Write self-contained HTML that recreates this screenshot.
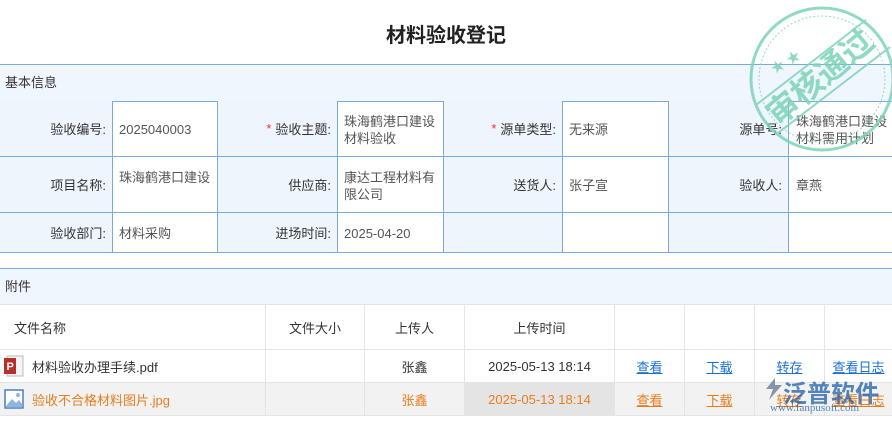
<!DOCTYPE html>
<html><head><meta charset="utf-8"><style>
*{margin:0;padding:0;box-sizing:border-box}
body{width:892px;height:425px;background:#fff;font-family:"Liberation Sans","Noto Sans CJK SC",sans-serif;font-size:13px;color:#333;position:relative;overflow:hidden}
.title{position:absolute;left:0;right:0;top:19px;text-align:center;font-size:20px;font-weight:bold;color:#222}
.bar{position:absolute;left:0;width:892px;background:#f0f6fd;border-top:1px solid #7aaad8;padding-left:5px;font-size:13px;color:#333}
.c{position:absolute;border-right:1px solid #7aaad8;border-bottom:1px solid #7aaad8}
.l{background:#eef5fd;text-align:right;padding-right:6px;display:flex;align-items:center;justify-content:flex-end}
.v{padding:12px 6px 0 6px;line-height:17px;color:#555}
.s{color:#e33;margin-right:4px}
.t{position:absolute;border-right:1px solid #e4e4e4;border-bottom:1px solid #e4e4e4;display:flex;align-items:center;justify-content:center}
a{color:#1a6fd4;text-decoration:underline}
.o{color:#e87d1d}
</style></head><body>
<div class="title">材料验收登记</div>
<div class="bar" style="top:64px;height:37px;line-height:36px">基本信息</div>
<div style="position:absolute;left:0;top:101px;width:892px;height:1px;background:#7aaad8"></div>

<div class="c l" style="left:0;top:101px;width:113px;height:56px">验收编号:</div>
<div class="c v" style="left:113px;top:101px;width:105px;height:56px;padding-top:20px">2025040003</div>
<div class="c l" style="left:218px;top:101px;width:120px;height:56px"><span class="s">*</span>验收主题:</div>
<div class="c v" style="left:338px;top:101px;width:106px;height:56px">珠海鹤港口建设材料验收</div>
<div class="c l" style="left:444px;top:101px;width:119px;height:56px"><span class="s">*</span>源单类型:</div>
<div class="c v" style="left:563px;top:101px;width:106px;height:56px;padding-top:20px">无来源</div>
<div class="c l" style="left:669px;top:101px;width:120px;height:56px">源单号:</div>
<div class="c v" style="left:789px;top:101px;width:103px;height:56px;padding:12px 0 0 7px;border-right:none;white-space:nowrap">珠海鹤港口建设<br>材料需用计划</div>

<div class="c l" style="left:0;top:157px;width:113px;height:56px">项目名称:</div>
<div class="c v" style="left:113px;top:157px;width:105px;height:56px">珠海鹤港口建设</div>
<div class="c l" style="left:218px;top:157px;width:120px;height:56px">供应商:</div>
<div class="c v" style="left:338px;top:157px;width:106px;height:56px">康达工程材料有限公司</div>
<div class="c l" style="left:444px;top:157px;width:119px;height:56px">送货人:</div>
<div class="c v" style="left:563px;top:157px;width:106px;height:56px;padding-top:20px">张子宣</div>
<div class="c l" style="left:669px;top:157px;width:120px;height:56px">验收人:</div>
<div class="c v" style="left:789px;top:157px;width:103px;height:56px;padding-top:20px;padding-left:7px;border-right:none">章燕</div>

<div class="c l" style="left:0;top:213px;width:113px;height:40px">验收部门:</div>
<div class="c v" style="left:113px;top:213px;width:105px;height:40px">材料采购</div>
<div class="c l" style="left:218px;top:213px;width:120px;height:40px">进场时间:</div>
<div class="c v" style="left:338px;top:213px;width:106px;height:40px">2025-04-20</div>
<div class="c l" style="left:444px;top:213px;width:119px;height:40px"></div>
<div class="c v" style="left:563px;top:213px;width:106px;height:40px"></div>
<div class="c l" style="left:669px;top:213px;width:120px;height:40px"></div>
<div class="c v" style="left:789px;top:213px;width:103px;height:40px;border-right:none"></div>

<div class="bar" style="top:268px;height:37px;line-height:36px;border-bottom:1px solid #e4e4e4">附件</div>

<div class="t" style="left:0;top:305px;width:266px;height:45px;justify-content:flex-start;padding-left:14px">文件名称</div>
<div class="t" style="left:266px;top:305px;width:99px;height:45px">文件大小</div>
<div class="t" style="left:365px;top:305px;width:100px;height:45px">上传人</div>
<div class="t" style="left:465px;top:305px;width:150px;height:45px">上传时间</div>
<div class="t" style="left:615px;top:305px;width:70px;height:45px"></div>
<div class="t" style="left:685px;top:305px;width:70px;height:45px"></div>
<div class="t" style="left:755px;top:305px;width:70px;height:45px"></div>
<div class="t" style="left:825px;top:305px;width:67px;height:45px;border-right:none"></div>

<div class="t" style="left:0;top:350px;width:266px;height:33px;justify-content:flex-start;padding-left:4px"><svg width="20" height="22" viewBox="0 0 20 22" style="margin-right:8px"><rect x="3" y="1" width="16" height="20" fill="#f4f4f4" stroke="#bbb"/><rect x="0" y="3" width="12" height="16" fill="#b7312c"/><text x="2.5" y="15" font-size="11" fill="#fff" font-family="Liberation Sans" font-weight="bold">P</text></svg>材料验收办理手续.pdf</div>
<div class="t" style="left:266px;top:350px;width:99px;height:33px"></div>
<div class="t" style="left:365px;top:350px;width:100px;height:33px">张鑫</div>
<div class="t" style="left:465px;top:350px;width:150px;height:33px">2025-05-13 18:14</div>
<div class="t" style="left:615px;top:350px;width:70px;height:33px"><a>查看</a></div>
<div class="t" style="left:685px;top:350px;width:70px;height:33px"><a>下载</a></div>
<div class="t" style="left:755px;top:350px;width:70px;height:33px"><a>转存</a></div>
<div class="t" style="left:825px;top:350px;width:67px;height:33px;border-right:none"><a>查看日志</a></div>

<div style="position:absolute;left:0;top:383px;width:892px;height:33px;background:#f2f2f2;border-bottom:1px solid #7aaad8"></div>
<div class="t o" style="left:0;top:383px;width:266px;height:33px;justify-content:flex-start;padding-left:4px"><svg width="20" height="22" viewBox="0 0 20 22" style="margin-right:8px"><rect x="1" y="2" width="18" height="18" fill="#fff" stroke="#4a7fc0" stroke-width="1.5"/><path d="M2 18 L8 11 L12 15 L15 12 L18 16 L18 19 L2 19Z" fill="#8fb4e0"/><circle cx="14" cy="7" r="2" fill="#8fb4e0"/></svg>验收不合格材料图片.jpg</div>
<div class="t" style="left:266px;top:383px;width:99px;height:33px"></div>
<div class="t o" style="left:365px;top:383px;width:100px;height:33px">张鑫</div>
<div class="t o" style="left:465px;top:383px;width:150px;height:33px;background:#e4e4e4">2025-05-13 18:14</div>
<div class="t" style="left:615px;top:383px;width:70px;height:33px"><a style="color:#e87d1d">查看</a></div>
<div class="t" style="left:685px;top:383px;width:70px;height:33px"><a style="color:#e87d1d">下载</a></div>
<div class="t" style="left:755px;top:383px;width:70px;height:33px"><a style="color:#e87d1d">转存</a></div>
<div class="t" style="left:825px;top:383px;width:67px;height:33px;border-right:none"><a style="color:#e87d1d">查看日志</a></div>

<svg style="position:absolute;left:763px;top:377px;opacity:.8" width="22" height="24" viewBox="0 0 22 24"><path d="M12 1 L3 12 L10 12 L6 23 L19 8 L12 8 Z" fill="#6b7d95"/></svg>
<div style="position:absolute;left:783px;top:374px;font-size:24px;font-weight:bold;color:#1d5fa8;opacity:.75;letter-spacing:0px">泛普软件</div>
<div style="position:absolute;left:770px;top:402px;font-size:11px;color:#1d5fa8;opacity:.75;font-family:'Liberation Serif',serif">www.fanpusoft.com</div>

<svg style="position:absolute;left:748px;top:5px" width="150" height="150" viewBox="0 0 150 150">
<g fill="none" stroke="#7dd3b8" opacity=".85">
<circle cx="74" cy="74" r="71" stroke-width="3"/>
<circle cx="74" cy="74" r="63" stroke-width="1" stroke-dasharray="2 2"/>
<line x1="8" y1="100" x2="118" y2="15" stroke-width="2"/>
<line x1="30" y1="128" x2="142" y2="42" stroke-width="2"/>
</g>
<text x="0" y="0" font-size="32" font-weight="bold" fill="#7dd3b8" opacity=".85" transform="translate(30 122) rotate(-40)" font-family="Noto Sans CJK SC">审核通过</text>
<text x="22" y="66" font-size="14" fill="#7dd3b8" opacity=".85" transform="rotate(-30 30 60)">★ ★</text>
</svg>
</body></html>
